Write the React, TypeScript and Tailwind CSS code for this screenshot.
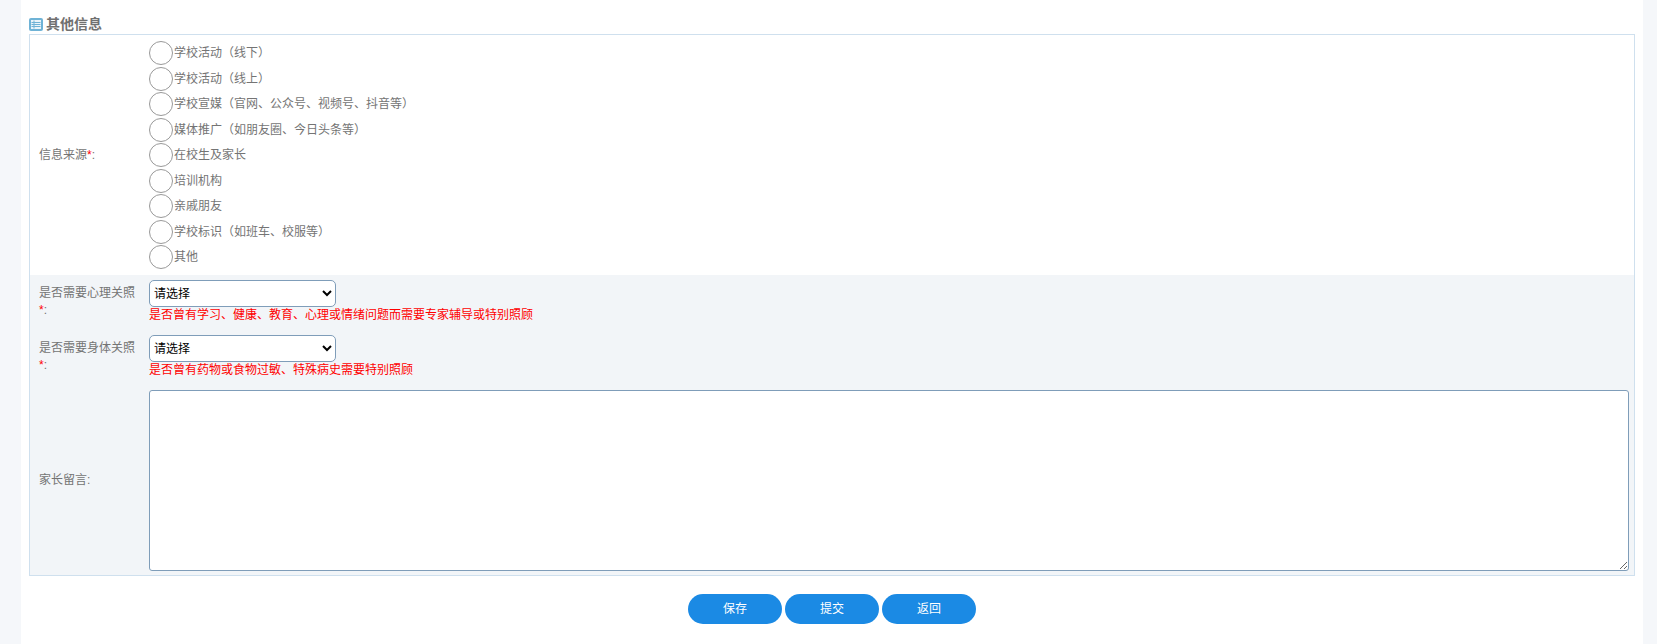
const sources = [
  "学校活动（线下）",
  "学校活动（线上）",
  "学校宣媒（官网、公众号、视频号、抖音等）",
  "媒体推广（如朋友圈、今日头条等）",
  "在校生及家长",
  "培训机构",
  "亲戚朋友",
  "学校标识（如班车、校服等）",
  "其他",
];

function Label({ text, required = true }: { text: string; required?: boolean }) {
  return (
    <div className="w-[119px] shrink-0 pl-[9px] pr-[12px] leading-[17px] text-[#747474]">
      {text}
      {required && <span className="text-[#f00]">*</span>}:
    </div>
  );
}

function SelectRow({ label, hint }: { label: string; hint: string }) {
  return (
    <div className="flex h-[55px] items-start bg-[#f2f5f8] pt-[5px]">
      <div className="pt-[5px]">
        <Label text={label} />
      </div>
      <div className="flex flex-col">
        <select className="h-[27px] w-[187px] rounded-[5px] border border-[#7f9db9] bg-white text-[12px] text-black">
          <option>请选择</option>
        </select>
        <span className="leading-[17px] text-[#f00]">{hint}</span>
      </div>
    </div>
  );
}

export default function App() {
  return (
    <div className="h-[644px] overflow-hidden bg-[#f5f7fa] text-[12px] [font-family:'Liberation_Sans','Noto_Sans_CJK_SC',sans-serif]">
      <div className="ml-[21px] mr-[14px] h-[644px] bg-white px-2 pt-[15px]">
        <div className="flex h-[19px] items-center gap-[3px] text-[14px] font-bold text-[#707070]">
          <svg width="14" height="13" viewBox="0 0 14 13" className="shrink-0">
            <rect x="0" y="0" width="14" height="13" rx="2" fill="#6fb3d6" />
            <rect x="2" y="2" width="10" height="9" fill="#eaf4f9" />
            <path d="M5 2.5v8M2.5 4.5h9M2.5 6.5h9M2.5 8.5h9" stroke="#6fb3d6" strokeWidth="1" fill="none" />
          </svg>
          其他信息
        </div>
        <div className="border border-[#cfe0ee]">
          <div className="flex h-[240px] items-center bg-white">
            <Label text="信息来源" />
            <div className="flex flex-col">
              {sources.map((s) => (
                <label key={s} className="flex h-[25.5px] items-center text-[#747474]">
                  <input
                    type="radio"
                    name="source"
                    className="mr-[1px] size-[24px] shrink-0 appearance-none rounded-full border border-[#999] bg-white"
                  />
                  {s}
                </label>
              ))}
            </div>
          </div>
          <SelectRow label="是否需要心理关照" hint="是否曾有学习、健康、教育、心理或情绪问题而需要专家辅导或特别照顾" />
          <SelectRow label="是否需要身体关照" hint="是否曾有药物或食物过敏、特殊病史需要特别照顾" />
          <div className="flex h-[190px] items-center bg-[#f2f5f8]">
            <Label text="家长留言" required={false} />
            <textarea className="mr-[5px] h-[181px] flex-1 rounded-[3px] border border-[#7f9db9] bg-white" />
          </div>
        </div>
        <div className="mt-[18px] flex justify-center gap-[3px]">
          {["保存", "提交", "返回"].map((b) => (
            <button key={b} className="h-[30px] w-[94px] rounded-[15px] bg-[#1b8ae4] text-[12px] text-white">
              {b}
            </button>
          ))}
        </div>
      </div>
    </div>
  );
}
